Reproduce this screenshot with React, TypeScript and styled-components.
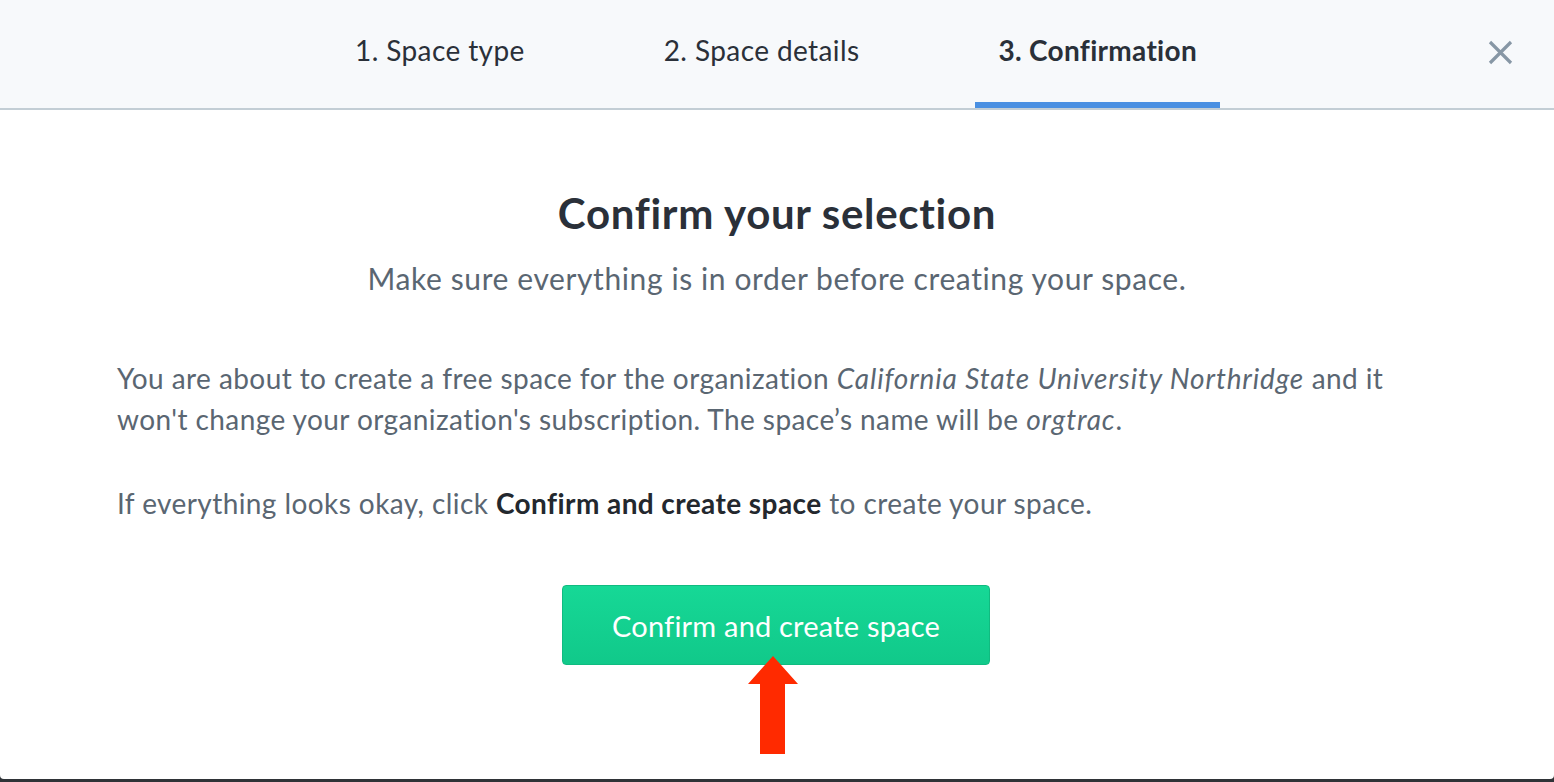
import React from "react";
import styled, { createGlobalStyle } from "styled-components";

const Global = createGlobalStyle`
  html, body { margin: 0; padding: 0; background: #2f3337; }
  body { font-family: "Lato", "Noto Sans", sans-serif; -webkit-font-smoothing: antialiased; }
  * { box-sizing: border-box; }
`;

const Modal = styled.div`
  width: 1554px;
  height: 779px;
  background: #ffffff;
  border-radius: 0 0 4px 4px;
  display: flex;
  flex-direction: column;
  overflow: hidden;
`;

const Header = styled.div`
  position: relative;
  height: 110px;
  flex: none;
  background: #f7f9fb;
  border-bottom: 2px solid #c3ced5;
  display: flex;
  justify-content: center;
  align-items: stretch;
`;

const Tabs = styled.nav`
  display: flex;
  gap: 93px;
  margin-left: -2px;
`;

const Tab = styled.div<{ $active?: boolean }>`
  padding: 33px 23px 0;
  display: flex;
  align-items: flex-start;
  font-size: 28px;
  line-height: 34px;
  letter-spacing: ${(p) => (p.$active ? "0.3px" : "0.4px")};
  color: #2a3039;
  font-weight: ${(p) => (p.$active ? 700 : 400)};
  border-bottom: 6px solid ${(p) => (p.$active ? "#4a90e2" : "transparent")};
`;

const Close = styled.button`
  position: absolute;
  right: 40px;
  top: 39px;
  width: 27px;
  height: 27px;
  padding: 0;
  border: none;
  background: transparent;
  cursor: pointer;
`;

const Content = styled.main`
  display: flex;
  flex-direction: column;
  padding: 79px 117px 0;
`;

const Title = styled.h1`
  margin: 0;
  text-align: center;
  font-size: 42px;
  line-height: 48px;
  letter-spacing: 0.7px;
  font-weight: 700;
  color: #2a3039;
`;

const Subtitle = styled.p`
  margin: 23px 0 0;
  text-align: center;
  font-size: 30px;
  line-height: 36px;
  letter-spacing: 0.6px;
  color: #5a6672;
`;

const Body = styled.p<{ $top: number }>`
  margin: ${(p) => p.$top}px 0 0;
  font-size: 28px;
  line-height: 41px;
  letter-spacing: 0.42px;
  color: #5a6672;
  b { color: #23282e; font-weight: 700; }
  em { font-style: italic; letter-spacing: 0.85px; }
`;

const ButtonRow = styled.div`
  margin-top: 61px;
  display: flex;
  justify-content: center;
  position: relative;
`;

const PrimaryButton = styled.button`
  width: 428px;
  height: 80px;
  margin-left: -2px;
  border: 1px solid #10bb80;
  border-radius: 4px;
  background: linear-gradient(#16d896, #11c98a);
  color: #ffffff;
  font-family: "Lato", "Noto Sans", sans-serif;
  font-size: 29px;
  letter-spacing: 0.2px;
  cursor: pointer;
`;

const Arrow = styled.svg`
  position: absolute;
  left: 630px;
  top: 71px;
`;

export default function App() {
  return (
    <>
      <Global />
      <Modal>
        <Header>
          <Tabs>
            <Tab>1. Space type</Tab>
            <Tab>2. Space details</Tab>
            <Tab $active>3. Confirmation</Tab>
          </Tabs>
          <Close aria-label="Close">
            <svg width="27" height="27" viewBox="0 0 27 27">
              <path d="M3 3 L24 24 M24 3 L3 24" stroke="#8797a5" strokeWidth="3.2" strokeLinecap="butt" />
            </svg>
          </Close>
        </Header>
        <Content>
          <Title>Confirm your selection</Title>
          <Subtitle>Make sure everything is in order before creating your space.</Subtitle>
          <Body $top={62}>
            You are about to create a free space for the organization <em>California State University Northridge</em> and it
            won't change your organization's subscription. The space’s name will be <em>orgtrac</em>.
          </Body>
          <Body $top={43}>
            If everything looks okay, click <b>Confirm and create space</b> to create your space.
          </Body>
          <ButtonRow>
            <PrimaryButton>Confirm and create space</PrimaryButton>
            <Arrow width="52" height="100" viewBox="0 0 52 100">
              <polygon points="26,0 51,28 38,28 38,98 13,98 13,28 1,28" fill="#ff2a00" />
            </Arrow>
          </ButtonRow>
        </Content>
      </Modal>
    </>
  );
}
